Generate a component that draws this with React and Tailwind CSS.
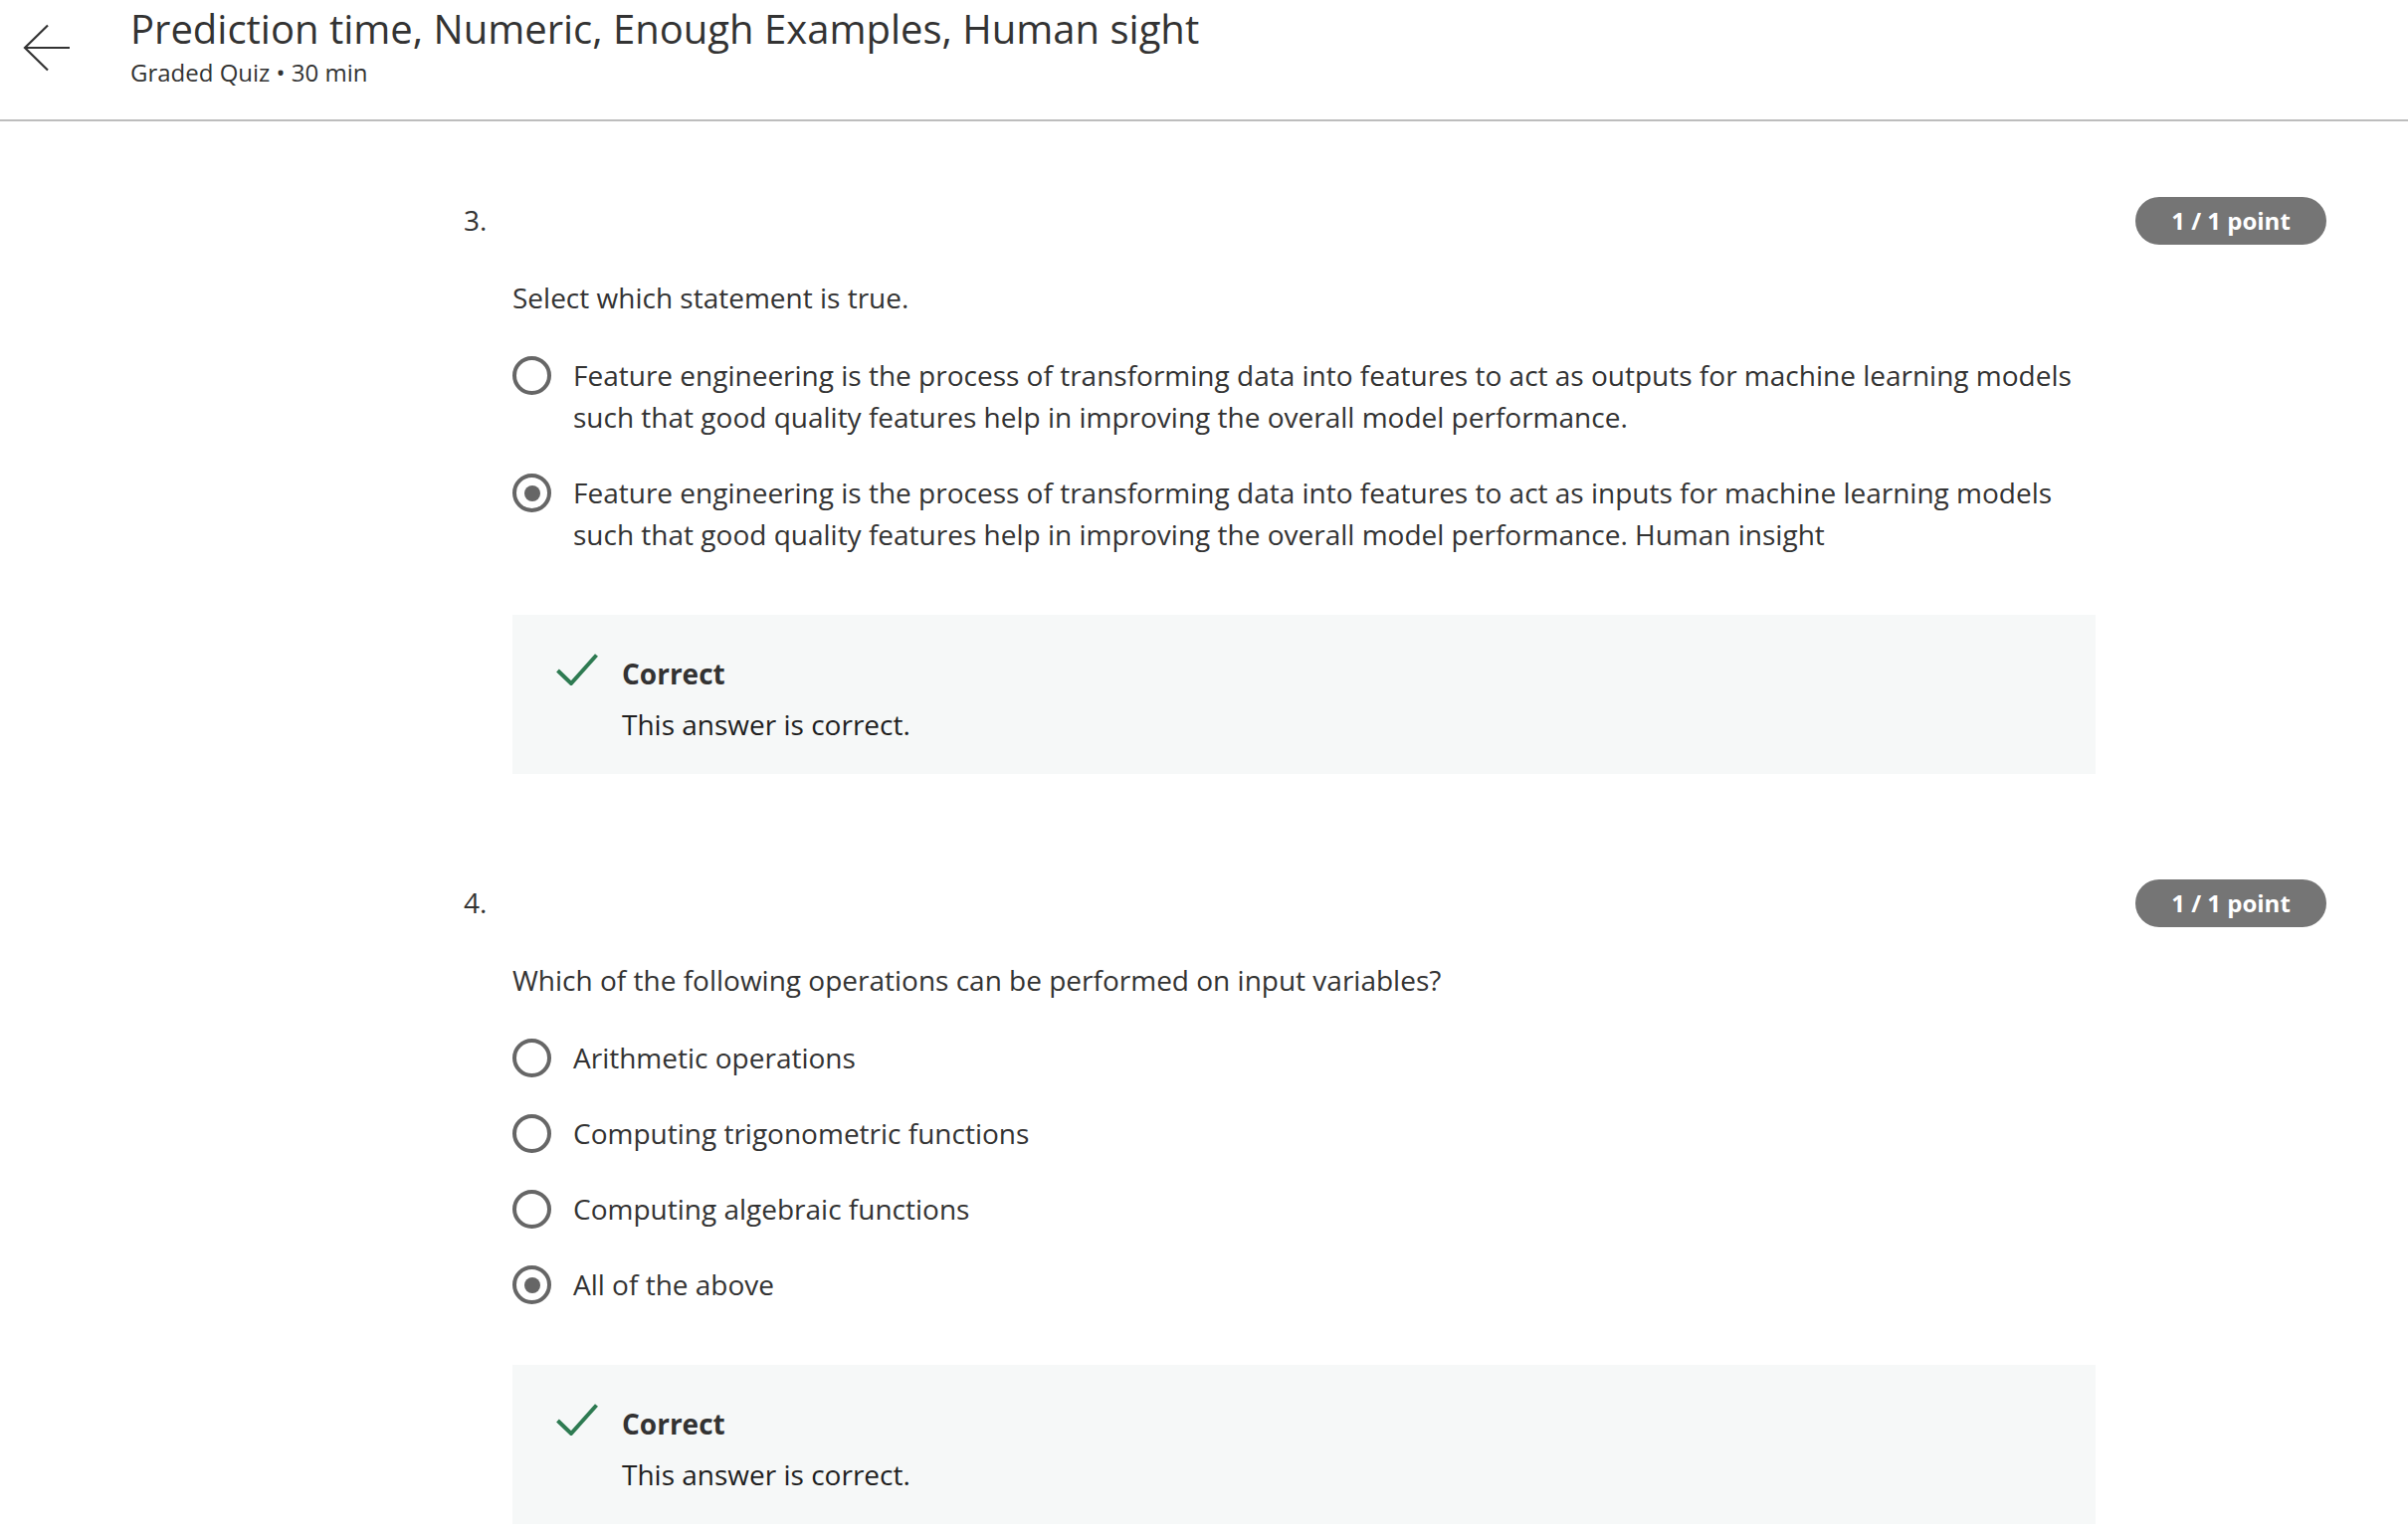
import React from "react";

const FONT = { fontFamily: '"Open Sans", "Noto Sans", sans-serif' };

function Radio({ checked }) {
  return (
    <div className="mt-[2px] flex h-[39px] w-[39px] shrink-0 items-center justify-center rounded-full border-[4px] border-[#666666]">
      {checked && <div className="h-[16px] w-[16px] rounded-full bg-[#666666]" />}
    </div>
  );
}

function Option({ checked, children }) {
  return (
    <div className="flex items-start gap-[22px]">
      <Radio checked={checked} />
      <div className="w-[1530px] text-[28px] leading-[42px] text-[#333333]">{children}</div>
    </div>
  );
}

function Check() {
  return (
    <svg width="42" height="32" viewBox="0 0 42 32" className="mt-[1px] shrink-0">
      <path d="M1.5 17 L15 30 L40.5 1.5" fill="none" stroke="#2e7b52" strokeWidth="4" strokeLinecap="butt" strokeLinejoin="miter" />
    </svg>
  );
}

function Feedback() {
  return (
    <div className="mt-[60px] flex h-[160px] w-[1591px] items-start gap-[24px] bg-[#f6f8f8] pl-[44px] pt-[38px]">
      <Check />
      <div className="flex flex-col gap-[9px]">
        <div className="text-[28px] font-bold leading-[42px] text-[#333333]">Correct</div>
        <div className="text-[28px] leading-[42px] text-[#1f1f1f]">This answer is correct.</div>
      </div>
    </div>
  );
}

function Question({ num, prompt, children, className }) {
  return (
    <div className={className}>
      <div className="flex h-[48px] items-center justify-between">
        <div className="-mt-[2px] text-[28px] leading-[42px] text-[#333333]">{num}</div>
        <div className="flex h-[48px] w-[192px] items-center justify-center rounded-full bg-[#757575] text-[24px] font-bold text-white">
          1 / 1 point
        </div>
      </div>
      <div className="ml-[49px] mt-[32px]">
        <div className="text-[28px] leading-[42px] text-[#333333]">{prompt}</div>
        <div className="mt-[36px] flex flex-col gap-[34px]">{children}</div>
        <Feedback />
      </div>
    </div>
  );
}

export default function App() {
  return (
    <div className="min-h-[1544px] w-[2420px] overflow-hidden bg-white" style={FONT}>
      <header className="flex h-[122px] items-start border-b-[2px] border-[#bdbdbd]">
        <div className="ml-[23px] mt-[24px] w-[88px] shrink-0">
          <svg width="48" height="48" viewBox="0 0 48 48">
            <path d="M47 24 H2 M25 1.5 L2 24 L25 46.5" fill="none" stroke="#333333" strokeWidth="2.2" />
          </svg>
        </div>
        <div className="ml-[20px] flex flex-col">
          <div className="mt-[5px] text-[40px] leading-[48px] text-[#333333]">
            Prediction time, Numeric, Enough Examples, Human sight
          </div>
          <div className="mt-[2px] text-[24px] leading-[36px] text-[#333333]">Graded Quiz • 30 min</div>
        </div>
      </header>
      <main className="pl-[466px] pr-[82px] pt-[76px]">
        <Question num="3." prompt="Select which statement is true.">
          <Option>
            Feature engineering is the process of transforming data into features to act as outputs for machine learning models such that good quality features help in improving the overall model performance.
          </Option>
          <Option checked>
            Feature engineering is the process of transforming data into features to act as inputs for machine learning models such that good quality features help in improving the overall model performance. Human insight
          </Option>
        </Question>
        <Question
          className="mt-[106px]"
          num="4."
          prompt="Which of the following operations can be performed on input variables?"
        >
          <Option>Arithmetic operations</Option>
          <Option>Computing trigonometric functions</Option>
          <Option>Computing algebraic functions</Option>
          <Option checked>All of the above</Option>
        </Question>
      </main>
    </div>
  );
}
